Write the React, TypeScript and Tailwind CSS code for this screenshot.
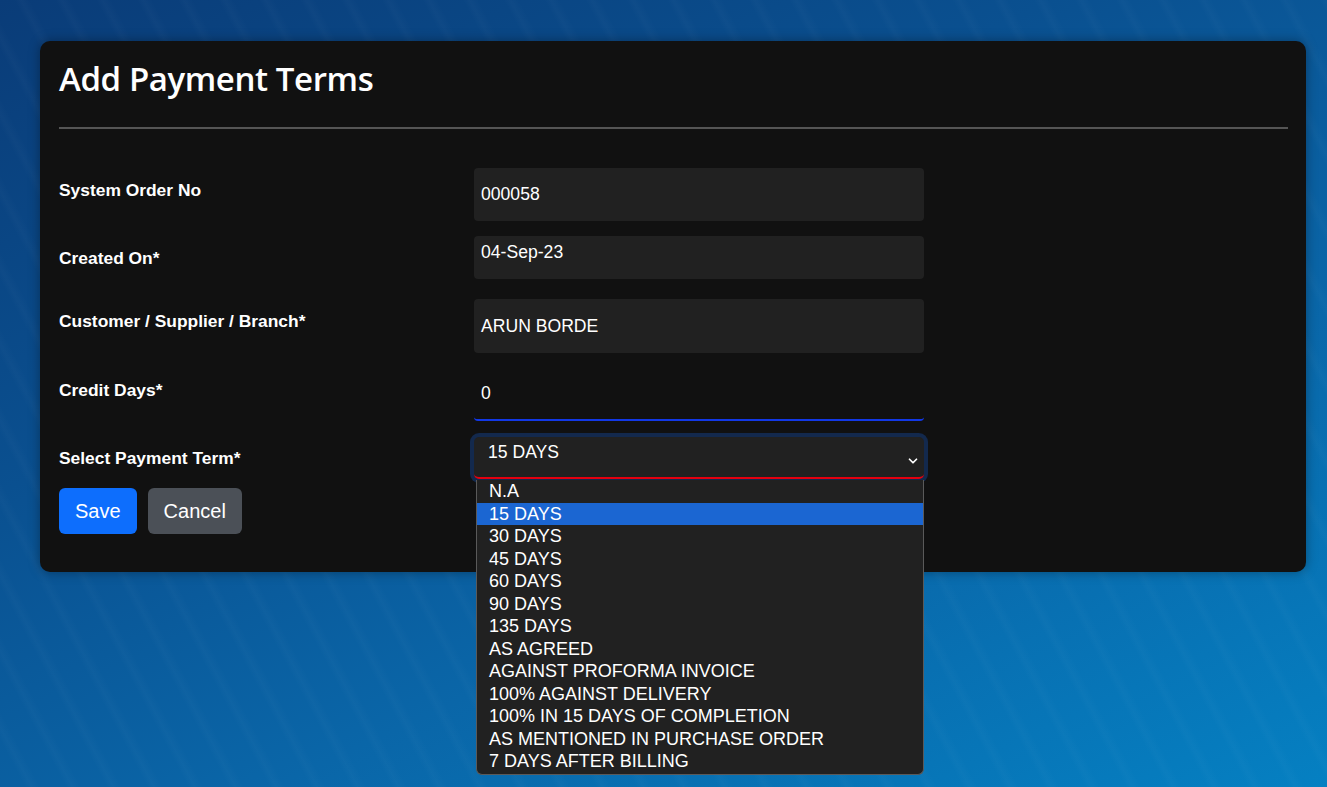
import { ChevronDown } from 'lucide-react';

const terms = [
  'N.A',
  '15 DAYS',
  '30 DAYS',
  '45 DAYS',
  '60 DAYS',
  '90 DAYS',
  '135 DAYS',
  'AS AGREED',
  'AGAINST PROFORMA INVOICE',
  '100% AGAINST DELIVERY',
  '100% IN 15 DAYS OF COMPLETION',
  'AS MENTIONED IN PURCHASE ORDER',
  '7 DAYS AFTER BILLING',
];

function Label({ children }: { children: React.ReactNode }) {
  return (
    <div className="w-[415px] shrink-0 pt-[12px] text-[17.4px] leading-[20px] font-bold text-white">
      {children}
    </div>
  );
}

export default function App() {
  return (
    <div
      className="min-h-[787px] w-full overflow-hidden pt-[41px] pl-10 font-['Liberation_Sans',Arial,sans-serif] bg-[repeating-linear-gradient(62deg,rgba(255,255,255,0)_0px,rgba(255,255,255,0)_22px,rgba(255,255,255,0.018)_28px,rgba(255,255,255,0)_36px),linear-gradient(155deg,#0a3c78_0%,#0a5090_35%,#0a66a8_65%,#0580c2_100%)]"
    >
      <div className="relative w-[1266px] rounded-[10px] bg-[#111111] px-[19px] pb-[38px] shadow-[0_0_12px_rgba(0,0,0,0.35)]">
        {/* Header */}
        <h2 className="pt-[16px] text-[33px] leading-[44px] font-semibold text-white font-['Open_Sans','Noto_Sans',sans-serif] tracking-[-0.4px]">
          Add Payment Terms
        </h2>
        <div className="mt-[26px] h-[2px] w-[1229px] bg-[#555555]" />

        {/* Form */}
        <div className="mt-[39px] flex flex-col">
          <div className="flex">
            <Label>System Order No</Label>
            <div className="flex h-[53px] w-[450px] items-start rounded-[4px] bg-[#212121] px-[7px] pt-[16px] text-[17.6px] leading-[20px] text-white">
              000058
            </div>
          </div>

          <div className="mt-[15px] flex">
            <Label>Created On*</Label>
            <div className="flex h-[43px] w-[450px] items-start rounded-[4px] bg-[#212121] px-[7px] pt-[6px] text-[17.6px] leading-[20px] text-white">
              04-Sep-23
            </div>
          </div>

          <div className="mt-[20px] flex">
            <Label>Customer / Supplier / Branch*</Label>
            <div className="flex h-[54px] w-[450px] items-start rounded-[4px] bg-[#212121] px-[7px] pt-[17px] text-[17.6px] leading-[20px] text-white">
              ARUN BORDE
            </div>
          </div>

          <div className="mt-[16px] flex">
            <div className="w-[415px] shrink-0 pt-[11px] text-[17.4px] leading-[20px] font-bold text-white">
              Credit Days*
            </div>
            <div className="flex h-[52px] w-[450px] items-start rounded-b-[4px] border-b-2 border-[#1238e6] px-[7px] pt-[14px] text-[17.6px] leading-[20px] text-white">
              0
            </div>
          </div>

          <div className="mt-[16px] flex">
            <div className="w-[415px] shrink-0 pt-[11px] text-[17.4px] leading-[20px] font-bold text-white">
              Select Payment Term*
            </div>
            <div className="relative">
              <div className="flex h-[42px] w-[450px] items-start justify-between rounded-[5px] border-b-2 border-[#e4000f] bg-[#212121] pl-[14px] pr-[4px] pt-[5px] text-[17.6px] leading-[20px] text-white ring-4 ring-[#13294d]">
                <span>15 DAYS</span>
                <ChevronDown size={14} strokeWidth={3} className="mt-[12px] text-white" />
              </div>

              {/* Open dropdown list */}
              <div className="absolute left-[2px] top-[43px] z-10 w-[448px] rounded-b-[6px] border border-t-0 border-[#5a5a5a] bg-[#212121] pb-[1px]">
                {terms.map((t) => (
                  <div
                    key={t}
                    className={
                      t === '15 DAYS'
                        ? 'h-[22.5px] bg-[#1b66d2] pl-[12px] text-[18px] leading-[22.5px] text-white'
                        : 'h-[22.5px] pl-[12px] text-[18px] leading-[22.5px] text-white'
                    }
                  >
                    {t}
                  </div>
                ))}
              </div>
            </div>
          </div>

          <div className="mt-[9px] flex gap-[11px]">
            <button className="h-[46px] rounded-[6px] bg-[#0d6efd] px-4 text-[20px] text-white">Save</button>
            <button className="h-[46px] rounded-[6px] bg-[#4b5057] px-4 text-[20px] text-white">Cancel</button>
          </div>
        </div>
      </div>
    </div>
  );
}
